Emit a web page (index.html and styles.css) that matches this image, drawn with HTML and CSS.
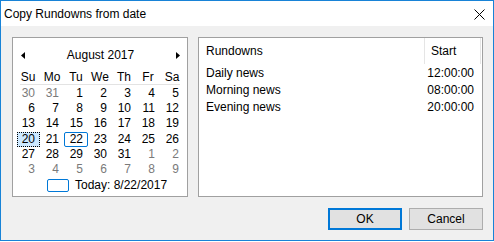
FILE: index.html
```html
<!DOCTYPE html>
<html>
<head>
<meta charset="utf-8">
<link rel="stylesheet" href="styles.css">
</head>
<body>
<div class="window">
  <div class="titlebar">
    <span class="title">Copy Rundowns from date</span>
    <svg class="close" width="11" height="11" viewBox="0 0 11 11"><path d="M0.5 0.5L10.5 10.5M10.5 0.5L0.5 10.5" stroke="#000" stroke-width="1" fill="none"/></svg>
  </div>
  <div class="content">
    <div class="panels">
      <div class="calendar">
        <div class="cal-head">
          <svg class="arrow" width="4" height="7" viewBox="0 0 4 7"><path d="M4 0L0 3.5L4 7Z" fill="#000"/></svg>
          <span class="month">August 2017</span>
          <svg class="arrow" width="4" height="7" viewBox="0 0 4 7"><path d="M0 0L4 3.5L0 7Z" fill="#000"/></svg>
        </div>
        <div class="dow">
          <span>Su</span><span>Mo</span><span>Tu</span><span>We</span><span>Th</span><span>Fr</span><span>Sa</span>
        </div>
        <div class="rule"></div>
        <div class="dates">
          <span class="cell other">30</span><span class="cell other">31</span><span class="cell">1</span><span class="cell">2</span><span class="cell">3</span><span class="cell">4</span><span class="cell">5</span>
          <span class="cell">6</span><span class="cell">7</span><span class="cell">8</span><span class="cell">9</span><span class="cell">10</span><span class="cell">11</span><span class="cell">12</span>
          <span class="cell">13</span><span class="cell">14</span><span class="cell">15</span><span class="cell">16</span><span class="cell">17</span><span class="cell">18</span><span class="cell">19</span>
          <span class="cell focus">20</span><span class="cell">21</span><span class="cell today">22</span><span class="cell">23</span><span class="cell">24</span><span class="cell">25</span><span class="cell">26</span>
          <span class="cell">27</span><span class="cell">28</span><span class="cell">29</span><span class="cell">30</span><span class="cell">31</span><span class="cell other">1</span><span class="cell other">2</span>
          <span class="cell other">3</span><span class="cell other">4</span><span class="cell other">5</span><span class="cell other">6</span><span class="cell other">7</span><span class="cell other">8</span><span class="cell other">9</span>
        </div>
        <div class="today-row">
          <span class="today-mark"></span>
          <span class="today-text">Today: 8/22/2017</span>
        </div>
      </div>
      <div class="list">
        <div class="list-head">
          <div class="col-name">Rundowns</div>
          <div class="col-start">Start</div>
        </div>
        <div class="row"><div class="name">Daily news</div><div class="time">12:00:00</div></div>
        <div class="row"><div class="name">Morning news</div><div class="time">08:00:00</div></div>
        <div class="row"><div class="name">Evening news</div><div class="time">20:00:00</div></div>
      </div>
    </div>
    <div class="buttons">
      <button class="btn default">OK</button>
      <button class="btn">Cancel</button>
    </div>
  </div>
</div>
</body>
</html>
```
FILE: styles.css
```css
body {
  margin: 0;
  background: #fff;
  font-family: "Liberation Sans", Arial, sans-serif;
  font-size: 12px;
  color: #000;
}
.window {
  width: 494px;
  height: 241px;
  box-sizing: border-box;
  border: 1px solid #1883d7;
  display: flex;
  flex-direction: column;
}
.titlebar {
  height: 25px;
  flex: none;
  background: #fff;
  display: flex;
  align-items: center;
  padding-left: 3px;
}
.close {
  margin-left: auto;
  margin-right: 8px;
  margin-top: 1px;
}
.content {
  flex: 1;
  background: #f0f0f0;
  padding: 11px 10px 10px 11px;
  display: flex;
  flex-direction: column;
}
.panels {
  display: flex;
  gap: 10px;
  height: 160px;
}
.calendar {
  width: 176px;
  box-sizing: border-box;
  border: 1px solid #a0a0a0;
  background: #fff;
  padding: 8px 3px 0 3px;
}
.cal-head {
  height: 18px;
  display: flex;
  align-items: center;
  justify-content: space-between;
  padding: 0 4px 0 5px;
}
.dow {
  margin-top: 6px;
  height: 14px;
  display: grid;
  grid-template-columns: repeat(7, 24px);
  line-height: 14px;
  text-align: center;
}
.rule {
  height: 1px;
  background: #e3e3e3;
  margin: 0 4px;
}
.dates {
  margin-top: 1px;
  display: grid;
  grid-template-columns: repeat(7, 24px);
  grid-auto-rows: 15.2px;
  line-height: 15.2px;
}
.cell {
  text-align: right;
  padding-right: 5px;
  box-sizing: border-box;
}
.cell.other {
  color: #7a7a7a;
}
.cell.focus {
  background: #cce8ff;
  border: 1px dotted #000;
  margin-left: 1px;
  line-height: 13.2px;
  padding-right: 4px;
}
.cell.today {
  border: 1px solid #0078d7;
  border-radius: 2px;
  line-height: 13.2px;
  padding-right: 4px;
}
.today-row {
  margin-top: 1px;
  height: 14px;
  display: flex;
  align-items: center;
  padding-left: 31px;
}
.today-mark {
  width: 22px;
  height: 13px;
  box-sizing: border-box;
  border: 1px solid #0078d7;
  border-radius: 2px;
}
.today-text {
  margin-left: 6px;
}
.list {
  flex: 1;
  box-sizing: border-box;
  border: 1px solid #a0a0a0;
  background: #fff;
}
.list-head {
  display: flex;
  height: 26px;
}
.col-name {
  width: 226px;
  box-sizing: border-box;
  padding-left: 7px;
  border-right: 1px solid #e5e5e5;
  display: flex;
  align-items: center;
}
.col-start {
  width: 56px;
  box-sizing: border-box;
  padding-left: 6px;
  border-right: 1px solid #e5e5e5;
  display: flex;
  align-items: center;
}
.row {
  display: flex;
  height: 17px;
  align-items: center;
}
.name {
  width: 226px;
  box-sizing: border-box;
  padding-left: 7px;
}
.time {
  width: 56px;
  box-sizing: border-box;
  text-align: right;
  padding-right: 7px;
}
.buttons {
  margin-top: 11px;
  display: flex;
  justify-content: flex-end;
  gap: 7px;
}
.btn {
  width: 74px;
  height: 22px;
  box-sizing: border-box;
  background: #e1e1e1;
  border: 1px solid #adadad;
  font: inherit;
  color: #000;
  padding: 0;
}
.btn.default {
  border: 2px solid #0078d7;
}
```
